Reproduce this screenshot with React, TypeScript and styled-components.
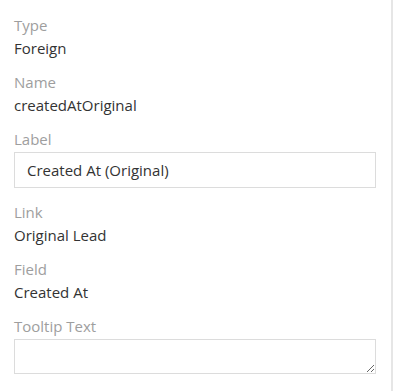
import styled, { createGlobalStyle } from "styled-components";

const GlobalStyle = createGlobalStyle`
  html, body {
    margin: 0;
    padding: 0;
    background: #fff;
  }
  body {
    font-family: "Open Sans", "Liberation Sans", sans-serif;
    font-size: 15px;
    color: #333;
  }
  * {
    box-sizing: border-box;
  }
`;

const Panel = styled.div`
  width: 393px;
  min-height: 391px;
  padding: 15px 15px 0 14px;
  border-right: 2px solid #e6e6e6;
`;

const Field = styled.div`
  margin-bottom: 14px;
`;

const FieldLabel = styled.div`
  font-size: 15px;
  line-height: 20px;
  color: #9e9e9e;
  margin-bottom: 3px;
`;

const FieldValue = styled.div`
  font-size: 15px;
  line-height: 20px;
  color: #333;
`;

const TextInput = styled.input`
  display: block;
  width: 100%;
  height: 36px;
  padding: 0 12px;
  border: 1px solid #dcdcdc;
  border-radius: 0;
  font-family: inherit;
  font-size: 15px;
  color: #333;
  background: #fff;
  outline: none;
`;

const TextArea = styled.textarea`
  display: block;
  width: 100%;
  height: 35px;
  padding: 6px 12px;
  border: 1px solid #dcdcdc;
  border-radius: 0;
  font-family: inherit;
  font-size: 15px;
  color: #333;
  background: #fff;
  outline: none;
  resize: vertical;
`;

type StaticField = { label: string; value: string };

const topFields: StaticField[] = [
  { label: "Type", value: "Foreign" },
  { label: "Name", value: "createdAtOriginal" }
];

const bottomFields: StaticField[] = [
  { label: "Link", value: "Original Lead" },
  { label: "Field", value: "Created At" }
];

export default function App(): JSX.Element {
  return (
    <>
      <GlobalStyle />
      <Panel>
        {topFields.map((f) => (
          <Field key={f.label}>
            <FieldLabel>{f.label}</FieldLabel>
            <FieldValue>{f.value}</FieldValue>
          </Field>
        ))}
        <Field>
          <FieldLabel>Label</FieldLabel>
          <TextInput type="text" defaultValue="Created At (Original)" />
        </Field>
        {bottomFields.map((f) => (
          <Field key={f.label}>
            <FieldLabel>{f.label}</FieldLabel>
            <FieldValue>{f.value}</FieldValue>
          </Field>
        ))}
        <Field>
          <FieldLabel>Tooltip Text</FieldLabel>
          <TextArea />
        </Field>
      </Panel>
    </>
  );
}
